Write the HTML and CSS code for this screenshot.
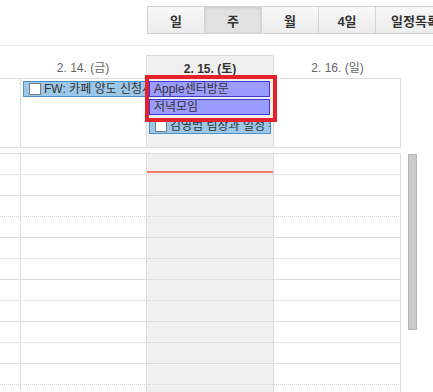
FILE: index.html
```html
<!DOCTYPE html>
<html lang="ko">
<head>
  <meta charset="UTF-8">
  <meta name="viewport" content="width=device-width, initial-scale=1.0">
  <title>주간 일정</title>
  <link rel="stylesheet" href="styles.css">
</head>
<body>
  <div class="toolbar">
    <button class="view">일</button>
    <button class="view active">주</button>
    <button class="view">월</button>
    <button class="view">4일</button>
    <button class="view">일정목록</button>
  </div>

  <div class="calendar">
    <div class="head">
      <div class="gutter"></div>
      <div class="day">2. 14. (금)</div>
      <div class="day today">2. 15. (토)</div>
      <div class="day sun">2. 16. (일)</div>
    </div>

    <div class="allday">
      <div class="gutter"></div>
      <div class="cell">
        <div class="event task wide"><span class="check"></span>FW: 카페 양도 신청서 확인</div>
      </div>
      <div class="cell today">
        <div class="event plan">Apple센터방문</div>
        <div class="event plan">저녁모임</div>
        <div class="event task"><span class="check"></span>김영범 팀장과 일정 확인</div>
        <div class="highlight"></div>
      </div>
      <div class="cell last"></div>
    </div>

    <div class="body">
      <div class="timegrid">
        <div class="cols">
          <div class="gutter"></div>
          <div class="col"></div>
          <div class="col today"><div class="now"></div></div>
          <div class="col last"></div>
        </div>
        <div class="slots">
          <div class="slot"></div>
          <div class="slot"></div>
          <div class="slot"></div>
          <div class="slot"></div>
          <div class="slot"></div>
          <div class="slot"></div>
        </div>
      </div>
      <div class="scrollbar"></div>
    </div>
  </div>
</body>
</html>
```

FILE: styles.css
```css
body {
  margin: 0;
  height: 392px;
  overflow: hidden;
  font-family: "Liberation Sans", "Noto Sans CJK KR", sans-serif;
  font-size: 12px;
  color: #333;
  background: #fff;
}

.toolbar {
  display: flex;
  height: 39px;
  padding: 6px 0 0 147px;
  border-bottom: 1px solid #e6e6e6;
  white-space: nowrap;
  overflow: hidden;
}
.view {
  flex: none;
  width: 58px;
  height: 28px;
  margin: 0 0 0 -1px;
  padding: 0;
  font-family: "Liberation Sans", "Noto Sans CJK KR", sans-serif;
  font-size: 13px;
  font-weight: bold;
  color: #333;
  border: 1px solid #d3d3d3;
  background: linear-gradient(#f8f8f8, #ececec);
  cursor: pointer;
}
.view:first-child {
  margin-left: 0;
}
.view:last-child {
  width: 80px;
}
.view.active {
  background: #e2e2e2;
  box-shadow: inset 0 1px 3px rgba(0, 0, 0, 0.12);
}

.head,
.allday,
.cols {
  display: grid;
  grid-template-columns: 20px 126px 127px 128px;
}

.head {
  margin-top: 9px;
  height: 23px;
}
.head .day {
  display: flex;
  align-items: center;
  justify-content: center;
  color: #666;
}
.head .today {
  font-weight: bold;
  color: #333;
  background: #f0f0f0;
  border: 1px solid #ddd;
  border-bottom: none;
  border-right: none;
}
.head .sun {
  border-left: 1px solid #ddd;
}

.allday {
  height: 68px;
  border-top: 1px solid #ddd;
  border-bottom: 1px solid #ddd;
  width: 401px;
}
.allday .cell {
  display: flex;
  flex-direction: column;
  gap: 2px;
  padding: 2px 0 0 2px;
  border-left: 1px solid #ddd;
}
.allday .cell.today {
  position: relative;
  background: #f0f0f0;
}
.allday .cell.last {
  border-right: 1px solid #ddd;
}

.event {
  box-sizing: border-box;
  display: flex;
  align-items: center;
  width: 121px;
  height: 16px;
  padding: 0 4px;
  white-space: nowrap;
  overflow: hidden;
  color: #333;
  line-height: 14px;
}
.event.plan {
  background: #9c9cff;
  border: 1px solid #3c3cd2;
}
.event.task {
  background: #9bc7e9;
  border: 1px solid #4c90c8;
  padding-left: 5px;
}
.event.wide {
  width: 126px;
}
.allday .today .task {
  width: 122px;
  margin-top: 1px;
}
.check {
  flex: none;
  box-sizing: border-box;
  width: 12px;
  height: 12px;
  margin-right: 3px;
  background: #fff;
  border: 1px solid #7a7a7a;
}

.highlight {
  position: absolute;
  left: -2px;
  top: -4px;
  width: 132px;
  height: 47px;
  box-sizing: border-box;
  border: 4px solid #e8202a;
}

.body {
  display: flex;
  margin-top: 5px;
}
.timegrid {
  display: grid;
  width: 401px;
  border-top: 1px solid #ddd;
}
.cols,
.slots {
  grid-area: 1 / 1;
}
.cols .col {
  border-left: 1px solid #ddd;
}
.cols .col.today {
  background: #f0f0f0;
}
.cols .col.last {
  border-right: 1px solid #ddd;
}
.now {
  height: 2px;
  margin-top: 17px;
  background: #f67a6a;
}

.slot {
  display: flow-root;
  height: 41px;
  border-bottom: 1px solid #ddd;
}
.slot::after {
  content: "";
  display: block;
  margin-top: 20px;
  border-top: 1px dotted #d2d2d2;
}

.scrollbar {
  flex: none;
  box-sizing: border-box;
  width: 9px;
  height: 176px;
  margin: 1px 0 0 7px;
  background: #c9c9c9;
  border: 1px solid #b4b4b4;
}
```
